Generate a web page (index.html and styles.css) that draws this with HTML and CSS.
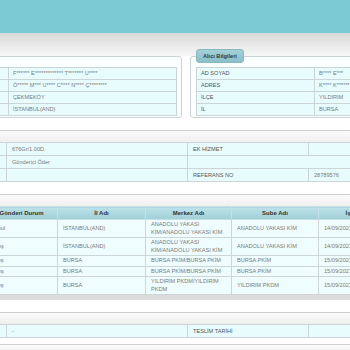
FILE: index.html
```html
<!DOCTYPE html>
<html lang="tr">
<head>
  <meta charset="UTF-8">
  <title>Gönderi Takip</title>
  <link rel="stylesheet" href="styles.css">
</head>
<body>

<div class="topbar"></div>

<div class="page">
  <div class="parties">
    <fieldset class="party">
      <legend>Gönderici Bilgileri</legend>
      <table class="info">
        <colgroup><col class="label-col"><col></colgroup>
        <tr><td class="label">AD SOYAD</td><td>F****** E************* T******* U****</td></tr>
        <tr><td class="label">ADRES</td><td>Ö***** M*** U**** C**** N**** Ç********</td></tr>
        <tr><td class="label">İLÇE</td><td>ÇEKMEKÖY</td></tr>
        <tr><td class="label">İL</td><td>İSTANBUL(AND)</td></tr>
      </table>
    </fieldset>

    <fieldset class="party">
      <legend>Alıcı Bilgileri</legend>
      <table class="info">
        <colgroup><col class="label-col"><col></colgroup>
        <tr><td class="label">AD SOYAD</td><td>B**** E***</td></tr>
        <tr><td class="label">ADRES</td><td>K**** K****** M***** S**** N***</td></tr>
        <tr><td class="label">İLÇE</td><td>YILDIRIM</td></tr>
        <tr><td class="label">İL</td><td>BURSA</td></tr>
      </table>
    </fieldset>
  </div>

  <div class="panel">
    <div class="panel-head"></div>
    <table class="grid">
      <colgroup><col class="g1"><col class="g2"><col class="g3"><col></colgroup>
      <tr><td class="label">AĞIRLIK / DESİ</td><td>676Gr/1.00D.</td><td class="label">EK HİZMET</td><td></td></tr>
      <tr><td class="label">ÖDEME TİPİ</td><td>Gönderici Öder</td><td colspan="2"></td></tr>
      <tr><td class="label">TAHSİLAT</td><td></td><td class="label">REFERANS NO</td><td>28789576</td></tr>
    </table>
  </div>

  <div class="panel">
    <div class="panel-head"></div>
    <table class="moves">
      <colgroup>
        <col class="m0"><col class="m1"><col class="m2"><col class="m3"><col class="m4"><col class="m5"><col>
      </colgroup>
      <thead>
        <tr><th>İşlem</th><th>Gönderi Durum</th><th>İl Adı</th><th>Merkez Adı</th><th>Sube Adı</th><th>İşlem Tarihi</th><th>Açıklama</th></tr>
      </thead>
      <tbody>
        <tr><td>1</td><td>Kabul</td><td>İSTANBUL(AND)</td><td>ANADOLU YAKASI KİM/ANADOLU YAKASI KİM</td><td>ANADOLU YAKASI KİM</td><td>14/09/2023 16:12</td><td></td></tr>
        <tr><td>2</td><td>Çıkış</td><td>İSTANBUL(AND)</td><td>ANADOLU YAKASI KİM/ANADOLU YAKASI KİM</td><td>ANADOLU YAKASI KİM</td><td>14/09/2023 21:40</td><td></td></tr>
        <tr><td>3</td><td>Varış</td><td>BURSA</td><td>BURSA PKİM/BURSA PKİM</td><td>BURSA PKİM</td><td>15/09/2023 03:05</td><td></td></tr>
        <tr><td>4</td><td>Çıkış</td><td>BURSA</td><td>BURSA PKİM/BURSA PKİM</td><td>BURSA PKİM</td><td>15/09/2023 05:31</td><td></td></tr>
        <tr><td>5</td><td>Varış</td><td>BURSA</td><td>YILDIRIM PKDM/YILDIRIM PKDM</td><td>YILDIRIM PKDM</td><td>15/09/2023 08:47</td><td></td></tr>
      </tbody>
    </table>
    <div class="panel-foot"></div>
  </div>

  <div class="panel panel-short">
    <div class="panel-head"></div>
    <table class="grid">
      <colgroup><col class="g1"><col class="g2"><col class="g3"><col></colgroup>
      <tr><td class="label">TESLİM ALAN</td><td>-</td><td class="label">TESLİM TARİHİ</td><td></td></tr>
    </table>
  </div>

  <div class="panel">
    <div class="panel-head"></div>
  </div>
</div>

</body>
</html>
```

FILE: styles.css
```css
body {
  margin: 0;
  font-family: "Liberation Sans", Arial, sans-serif;
  font-size: 5.6px;
  color: #7a7a7a;
  background: #fff;
  overflow: hidden;
}

.topbar {
  height: 33px;
  background: #7ccbd3;
}

/* the page is wider than the window and scrolled to the right */
.page {
  width: 612px;
  margin-left: -120px;
}

.parties {
  display: flex;
  gap: 8px;
  padding: 16px 4px 0;
  background: linear-gradient(#d9d9d9, #f7f7f7) top / 100% 23px no-repeat;
}

.party {
  flex: 1;
  min-width: 0;
  margin: 0;
  padding: 4px 4px 1px 5px;
  border: 1px solid #c9d3d5;
  border-radius: 3px;
  background: #fbffff;
}

.party legend {
  box-sizing: border-box;
  height: 14px;
  line-height: 12px;
  padding: 0 6px;
  border: 1px solid #88b9c2;
  border-radius: 3px;
  background: linear-gradient(#a4d0d8, #8cbfc9);
  color: #2c3d42;
  font-weight: bold;
}

table {
  width: 100%;
  border-collapse: collapse;
  table-layout: fixed;
}

td {
  border: 1px solid #cbd4d6;
  background: #e8fcfd;
  padding: 0 4px;
  white-space: nowrap;
  overflow: hidden;
}

.info td {
  height: 11px;
  line-height: 11px;
}

.label-col {
  width: 118px;
}

td.label {
  color: #555;
}

.panel {
  margin-top: 12px;
  border-top: 1px solid #cfcfcf;
}

.panel-head {
  height: 11px;
  background: linear-gradient(#fbfbfb, #efefef);
}

.grid td {
  height: 12px;
  line-height: 12px;
  padding: 0 5px;
}

.g1 { width: 126px; }
.g2 { width: 181px; }
.g3 { width: 121px; }

.moves th {
  height: 12px;
  padding: 0 4px;
  border: 1px solid #c3e1e7;
  background: linear-gradient(#bde2e9, #a0cfd8);
  color: #333;
  font-size: 6px;
  font-weight: bold;
  text-align: center;
  white-space: nowrap;
  overflow: hidden;
}

.moves td {
  padding: 1px 5px;
  line-height: 7.5px;
  white-space: normal;
  vertical-align: middle;
  background: #effdfe;
  border-color: #cdd5d7;
}

.m0 { width: 105px; }
.m1 { width: 72px; }
.m2 { width: 88px; }
.m3 { width: 86px; }
.m4 { width: 87px; }
.m5 { width: 87px; }

.panel-foot {
  height: 5px;
  background: #dcdcdc;
}

.panel-short + .panel {
  margin-top: 6px;
}
```
